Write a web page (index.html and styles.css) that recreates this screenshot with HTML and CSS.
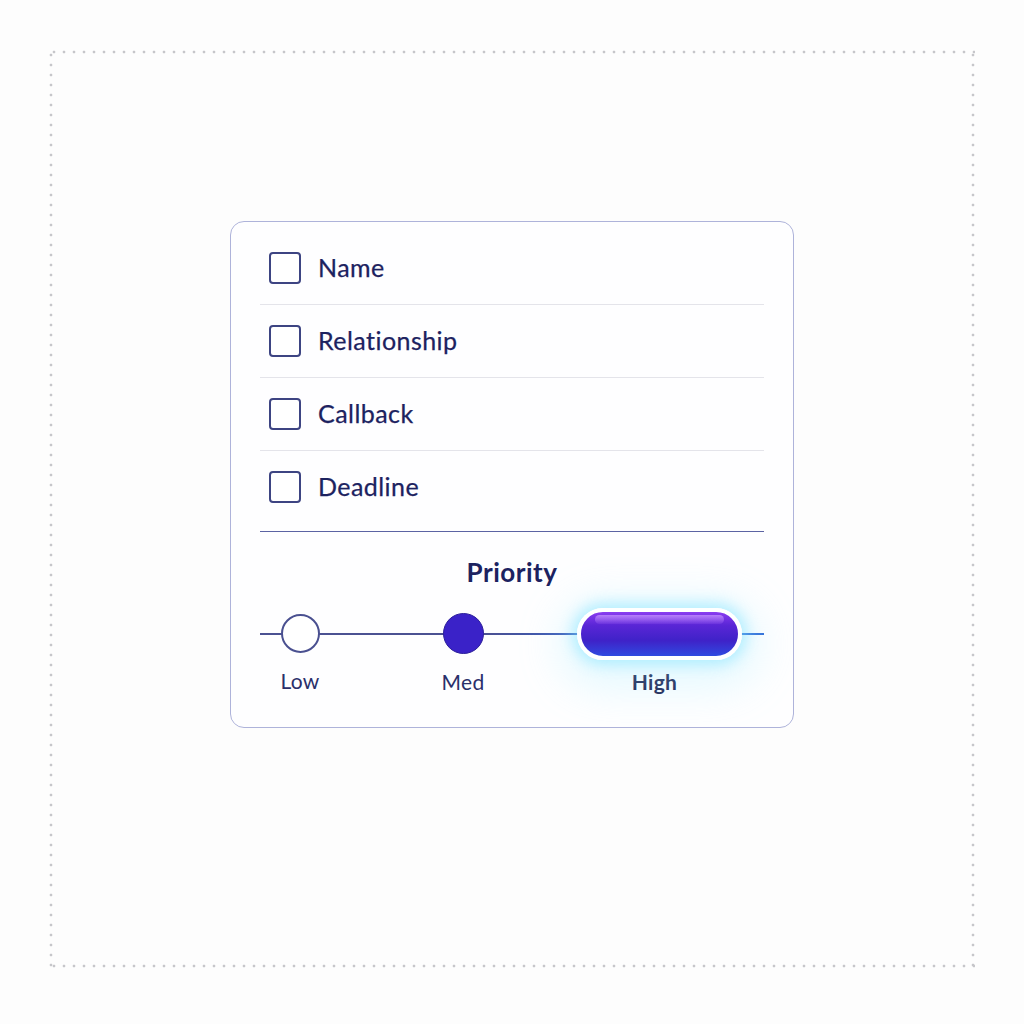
FILE: index.html
```html
<!DOCTYPE html>
<html lang="en">
<head>
<meta charset="utf-8">
<title>Fields and Priority</title>
<link rel="stylesheet" href="styles.css">
</head>
<body>
<div class="frame">
  <section class="card">
    <ul class="fields">
      <li class="field"><span class="check"></span><span class="label">Name</span></li>
      <li class="field"><span class="check"></span><span class="label">Relationship</span></li>
      <li class="field"><span class="check"></span><span class="label">Callback</span></li>
      <li class="field"><span class="check"></span><span class="label">Deadline</span></li>
    </ul>
    <div class="rule"></div>
    <h2 class="title">Priority</h2>
    <div class="slider">
      <div class="stop stop-low">
        <span class="knob knob-low"></span>
        <span class="stop-label">Low</span>
      </div>
      <div class="stop stop-med">
        <span class="knob knob-med"></span>
        <span class="stop-label">Med</span>
      </div>
      <div class="stop stop-high">
        <span class="pill"><span class="shine"></span></span>
        <span class="stop-label stop-label-high">High</span>
      </div>
    </div>
  </section>
</div>
</body>
</html>
```

FILE: styles.css
```css
html, body {
  margin: 0;
  padding: 0;
  background: #fdfdfd;
}

body {
  font-family: "Lato", "Noto Sans", sans-serif;
  color: #1e2463;
  width: 1024px;
  height: 1024px;
  padding-top: 50px;
  box-sizing: border-box;
}

.frame {
  margin-left: 49px;
  width: 926px;
  height: 918px;
  box-sizing: border-box;
  padding-top: 171px;
  display: flex;
  flex-direction: column;
  align-items: center;
  background-image:
    radial-gradient(circle at center, #c6c6ca 1.1px, transparent 1.7px),
    radial-gradient(circle at center, #c6c6ca 1.1px, transparent 1.7px),
    radial-gradient(circle at center, #c6c6ca 1.1px, transparent 1.7px),
    radial-gradient(circle at center, #c6c6ca 1.1px, transparent 1.7px);
  background-size: 10px 4px, 10px 4px, 4px 10px, 4px 10px;
  background-position: 0 0, 0 100%, 0 0, 100% 0;
  background-repeat: repeat-x, repeat-x, repeat-y, repeat-y;
}

.card {
  width: 564px;
  height: 507px;
  box-sizing: border-box;
  border: 1.5px solid #aeb3da;
  border-radius: 14px;
  background: #fefeff;
  padding: 9.5px 29px 0 29px;
  display: flex;
  flex-direction: column;
  overflow: hidden;
}

.fields {
  list-style: none;
  margin: 0;
  padding: 0;
}

.field {
  height: 73px;
  box-sizing: border-box;
  border-bottom: 1px solid #e4e4ea;
  display: flex;
  align-items: center;
  padding-left: 9px;
  gap: 17px;
}

.field:last-child {
  border-bottom: none;
  height: 72px;
}

.check {
  width: 32px;
  height: 32px;
  box-sizing: border-box;
  border: 2px solid #3d4482;
  border-radius: 4px;
  background: #fff;
  flex: none;
}

.label {
  font-size: 25px;
  line-height: 1;
  color: #1c225f;
  letter-spacing: 0.45px;
  -webkit-text-stroke: 0.25px #1c225f;
}

.rule {
  margin-top: 8px;
  height: 1.5px;
  background: #5b63a3;
}

.title {
  margin: 25px 0 0 0;
  text-align: center;
  font-size: 26px;
  font-weight: 700;
  line-height: 30px;
  color: #1c2260;
  letter-spacing: 0.5px;
}

.slider {
  position: relative;
  margin-top: 10px;
  display: flex;
  align-items: flex-start;
  height: 100px;
}

.slider::before {
  content: "";
  position: absolute;
  left: 0;
  right: 0;
  top: 36px;
  height: 1.5px;
  background: linear-gradient(90deg, #4b5192 0%, #4b5192 45%, #2f5fd0 70%, #2d6ad8 100%);
}

.stop {
  position: relative;
  display: flex;
  flex-direction: column;
  align-items: center;
}

.stop-low {
  width: 80px;
}

.stop-med {
  width: 80px;
  margin-left: 83px;
}

.stop-high {
  width: 165px;
  margin-left: 74px;
}

.knob {
  margin-top: 17px;
  width: 39px;
  height: 39px;
  box-sizing: border-box;
  border-radius: 50%;
}

.knob-low {
  background: #fff;
  border: 2px solid #4a5090;
}

.knob-med {
  margin-top: 16px;
  width: 41px;
  height: 41px;
  background: #3a22c8;
  border: 1.5px solid #2c1f9a;
}

.stop-label {
  margin-top: 16px;
  font-size: 21px;
  line-height: 24px;
  color: #2a2f6a;
  letter-spacing: 0.3px;
}

.pill {
  position: relative;
  width: 165px;
  height: 52px;
  margin-top: 11px;
  box-sizing: border-box;
  border: 4px solid #ffffff;
  border-radius: 26px;
  background: linear-gradient(180deg, #8a3cf0 0%, #5a26d6 30%, #3f22c8 65%, #2f4ae0 100%);
  box-shadow: 0 0 14px 5px rgba(110, 225, 255, 0.45), 0 10px 42px 18px rgba(165, 238, 255, 0.28);
}

.shine {
  position: absolute;
  left: 14px;
  right: 14px;
  top: 3px;
  height: 9px;
  border-radius: 6px;
  background: linear-gradient(180deg, rgba(200, 150, 255, 0.75), rgba(170, 110, 250, 0.15));
}

.stop-label-high {
  margin-top: 10px;
  margin-left: -10px;
  font-weight: 700;
  color: #1a2050;
}
```
